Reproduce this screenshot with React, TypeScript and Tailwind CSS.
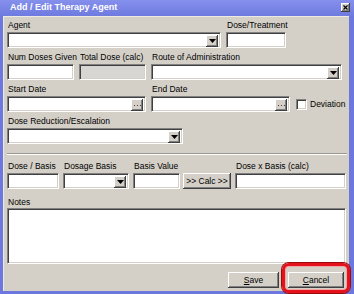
import React from 'react';

const sunken =
  'border border-t-[#808080] border-l-[#808080] border-b-white border-r-white shadow-[inset_1px_1px_0_#404040,inset_-1px_-1px_0_#d4d0c8]';
const raised =
  'bg-[#d4d0c8] shadow-[inset_-1px_-1px_0_#404040,inset_1px_1px_0_#ffffff,inset_-2px_-2px_0_#808080]';

const Label: React.FC<{ text: string; className?: string }> = ({ text, className = '' }) => (
  <div className={`h-[10px] leading-[10px] mb-[2px] pl-px whitespace-nowrap ${className}`}>{text}</div>
);

const Arrow: React.FC = () => (
  <div className={`${raised} absolute right-[2px] top-[2px] w-[12px] h-[12px] flex items-center justify-center`}>
    <svg width="7" height="4" viewBox="0 0 7 4">
      <polygon points="0,0 7,0 3.5,4" fill="#000" />
    </svg>
  </div>
);

const Select: React.FC<{ width: string }> = ({ width }) => (
  <div className={`${sunken} relative bg-white h-[16px] ${width}`}>
    <Arrow />
  </div>
);

const DateField: React.FC = () => (
  <div className={`${sunken} relative bg-white h-[16px] w-[139px]`}>
    <div className={`${raised} absolute right-[2px] top-[2px] w-[12px] h-[12px] flex items-center justify-center`}>
      <svg width="7" height="3" viewBox="0 0 7 3">
        <rect x="0" y="1" width="1" height="1" fill="#404040" />
        <rect x="3" y="1" width="1" height="1" fill="#404040" />
        <rect x="6" y="1" width="1" height="1" fill="#404040" />
      </svg>
    </div>
  </div>
);

export default function App() {
  return (
    <div
      className="w-[354px] h-[294px] bg-[#6d78de] flex flex-col relative text-[8.5px] text-black overflow-hidden"
      style={{ fontFamily: '"Liberation Sans", Arial, sans-serif' }}
    >
      {/* title bar */}
      <div className="h-[16px] flex items-start justify-between bg-gradient-to-b from-[#8590ec] to-[#6f7ae0]">
        <div className="pl-[10px] leading-[14px] text-[9px] font-bold text-white">Add / Edit Therapy Agent</div>
        <div className={`${raised} mt-[3px] mr-[4px] w-[9px] h-[9px] flex items-center justify-center`}>
          <svg width="5" height="5" viewBox="0 0 5 5">
            <path d="M0.5 0.5 L4.5 4.5 M4.5 0.5 L0.5 4.5" stroke="#000" strokeWidth="1.2" />
          </svg>
        </div>
      </div>

      {/* body */}
      <div className="flex-1 ml-[3px] mr-[5px] mb-[3px] bg-[#d4d0c8] border-t border-l border-[#eceae4] pl-[3px] pt-[3px] flex flex-col">
        {/* row 1 */}
        <div className="flex gap-[5px]">
          <div className="w-[214px]">
            <Label text="Agent" />
            <Select width="w-[214px]" />
          </div>
          <div className="w-[60px]">
            <Label text="Dose/Treatment" />
            <div className={`${sunken} bg-white h-[16px] w-[60px]`} />
          </div>
        </div>

        {/* row 2 */}
        <div className="flex gap-[5px] mt-[4px]">
          <div className="w-[67px]">
            <Label text="Num Doses Given" />
            <div className={`${sunken} bg-white h-[16px] w-[67px]`} />
          </div>
          <div className="w-[67px]">
            <Label text="Total Dose (calc)" />
            <div className={`${sunken} bg-[#d8d6d2] h-[16px] w-[67px]`} />
          </div>
          <div className="w-[191px]">
            <Label text="Route of Administration" />
            <Select width="w-[191px]" />
          </div>
        </div>

        {/* row 3 */}
        <div className="flex gap-[5px] mt-[4px] items-end">
          <div className="w-[139px]">
            <Label text="Start Date" />
            <DateField />
          </div>
          <div className="w-[139px]">
            <Label text="End Date" />
            <DateField />
          </div>
          <div className="flex items-center h-[16px] ml-[1px] gap-[3px]">
            <div className={`${sunken} bg-white w-[11px] h-[11px]`} />
            <span>Deviation</span>
          </div>
        </div>

        {/* row 4 */}
        <div className="mt-[4px]">
          <Label text="Dose Reduction/Escalation" />
          <Select width="w-[176px]" />
        </div>

        {/* separator */}
        <div className="mt-[9px] w-[340px] border-t border-[#9a978f] border-b border-b-white" />

        {/* row 5 */}
        <div className="flex mt-[6px]">
          <div className="w-[52px] mr-[4px]">
            <Label text="Dose / Basis" />
            <div className={`${sunken} bg-white h-[16px] w-[52px]`} />
          </div>
          <div className="w-[66px] mr-[4px]">
            <Label text="Dosage Basis" />
            <Select width="w-[66px]" />
          </div>
          <div className="w-[47px] mr-[3px]">
            <Label text="Basis Value" />
            <div className={`${sunken} bg-white h-[16px] w-[47px]`} />
          </div>
          <div className="mr-[4px] flex flex-col justify-end">
            <div className={`${raised} h-[16px] w-[48px] flex items-center justify-center leading-none`}>
              &gt;&gt; Calc &gt;&gt;
            </div>
          </div>
          <div className="w-[111px]">
            <Label text="Dose x Basis (calc)" />
            <div className={`${sunken} bg-white h-[16px] w-[111px]`} />
          </div>
        </div>

        {/* notes */}
        <div className="mt-[8px]">
          <div className="h-[10px] leading-[10px] mb-px pl-px">Notes</div>
          <div className={`${sunken} bg-white h-[56px] w-[339px]`} />
        </div>

        {/* buttons */}
        <div className="flex justify-end gap-[9px] mt-[8px] pr-[5px]">
          <div className={`${raised} h-[16px] w-[51px] flex items-center justify-center leading-none`}>
            <span>
              <span className="underline">S</span>ave
            </span>
          </div>
          <div className={`${raised} h-[16px] w-[56px] flex items-center justify-center leading-none`}>
            <span>
              <span className="underline">C</span>ancel
            </span>
          </div>
        </div>
      </div>

      {/* red highlight around Cancel */}
      <div className="absolute left-[282px] top-[263px] w-[68px] h-[30px] rounded-[7px] border-[3px] border-[#e3121b] shadow-[inset_0_0_0_1px_#f4a6a6,0_0_0_1px_#9e0a0a]" />
    </div>
  );
}
